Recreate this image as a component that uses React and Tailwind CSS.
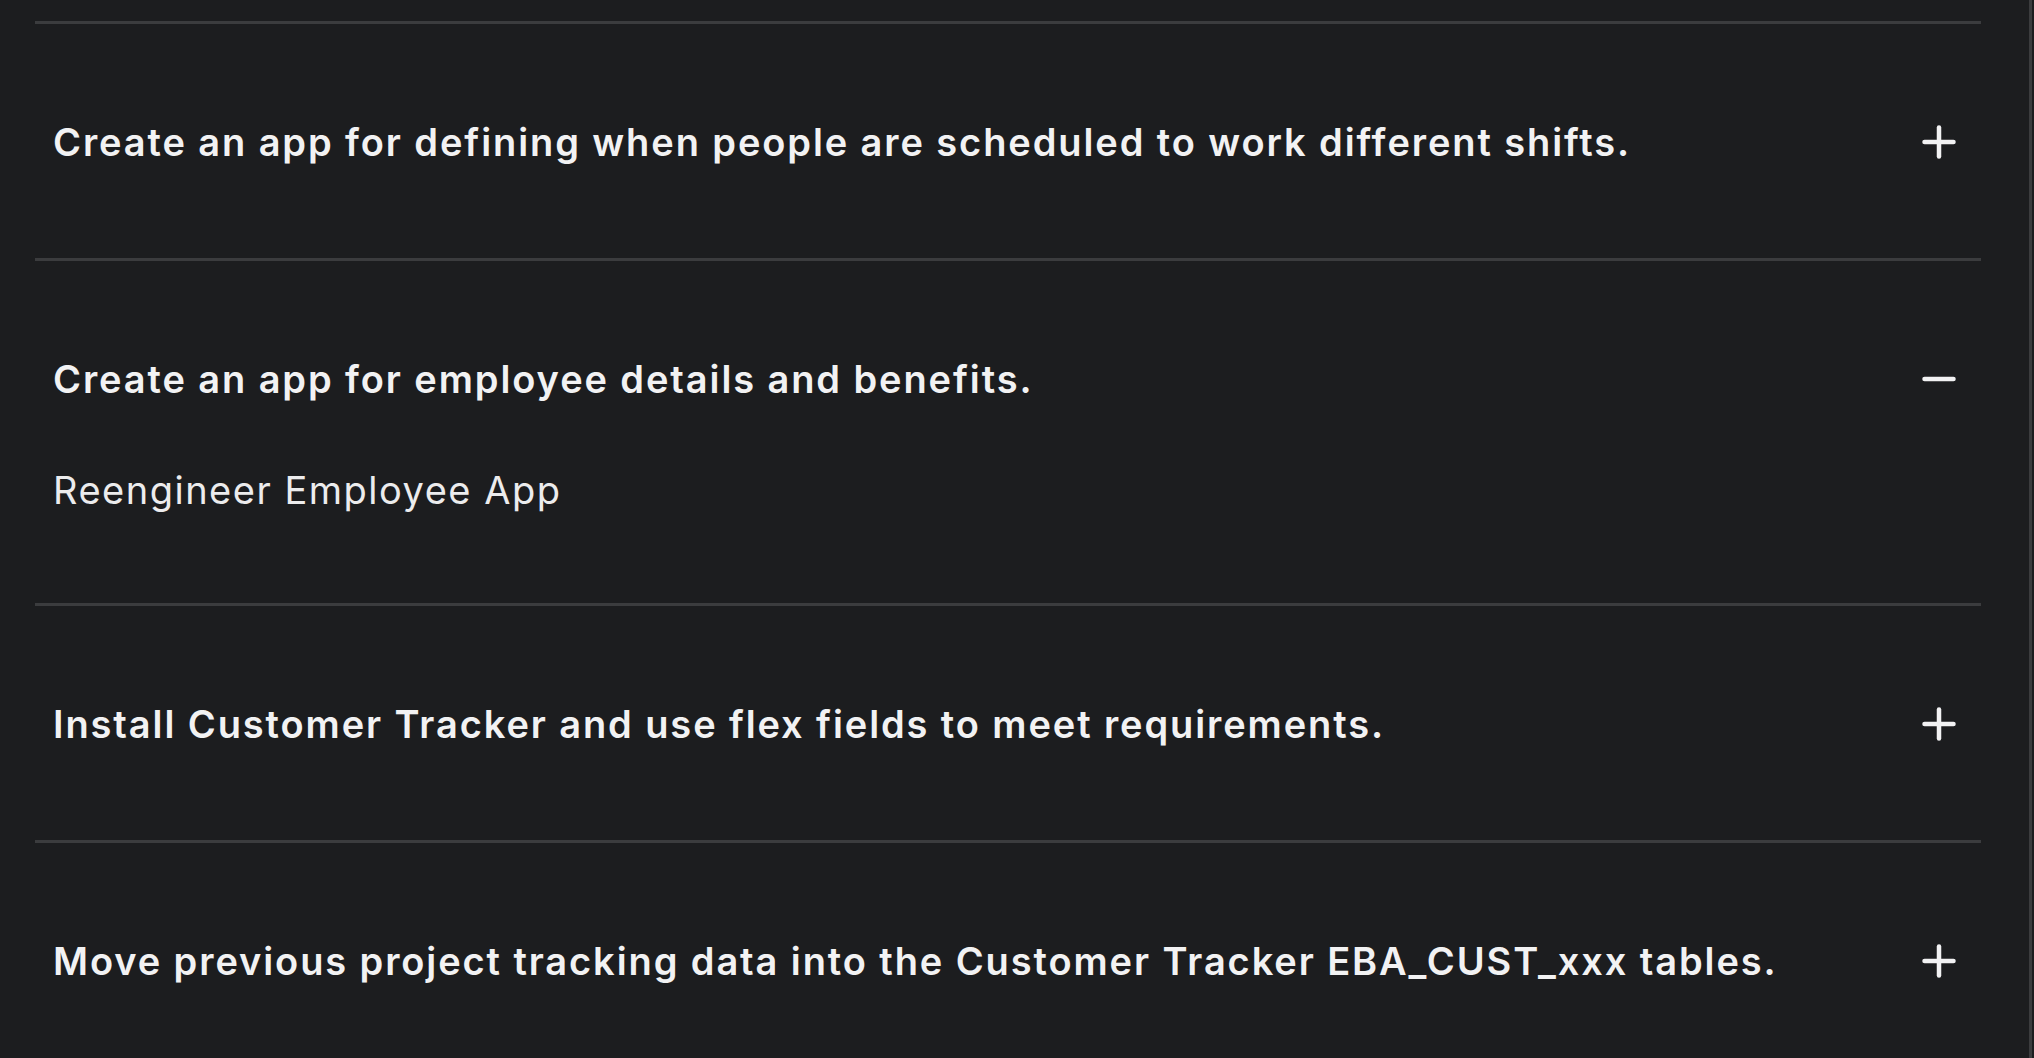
import React, { useState } from 'react';

const items = [
    { q: 'Create an app for defining when people are scheduled to work different shifts.', a: 'Reengineer Shift Scheduler App' },
    { q: 'Create an app for employee details and benefits.', a: 'Reengineer Employee App' },
    { q: 'Install Customer Tracker and use flex fields to meet requirements.', a: 'Customer Tracker' },
    { q: 'Move previous project tracking data into the Customer Tracker EBA_CUST_xxx tables.', a: 'Data Migration' },
];

const Toggle = ({ open }) => (
    <svg width="34" height="34" viewBox="0 0 34 34" fill="none" stroke="currentColor" strokeWidth="4.5" strokeLinecap="round">
        <path d="M2.5 17h29" />
        {!open && <path d="M17 2.5v29" />}
    </svg>
);

export default function App() {
    const [openIdx, setOpenIdx] = useState(1);

    return (
        <div className="flex h-screen w-full overflow-hidden bg-[#1c1d1f]" style={{ fontFamily: 'Inter, "Noto Sans", sans-serif' }}>
            <div className="flex-1 min-w-0 pl-[35px] pr-[48px] pt-[21px]">
                {items.map((it, i) => {
                    const open = openIdx === i;
                    return (
                        <div key={i} className="border-t-[3px] border-[#3b3c3e] pl-[18px] pr-[25px] pt-[90px] pb-[88px]">
                            <button
                                onClick={() => setOpenIdx(open ? -1 : i)}
                                className="w-full flex items-center justify-between h-[56px] text-left text-[#f2f2f3]"
                            >
                                <span className="text-[38px] font-semibold leading-[56px] tracking-[1.9px]">{it.q}</span>
                                <Toggle open={open} />
                            </button>
                            {open && (
                                <div className="mt-[58px] text-[38px] leading-[50px] text-[#ececed] tracking-[1.5px]">{it.a}</div>
                            )}
                        </div>
                    );
                })}
            </div>
            <div className="w-[3px] bg-[#3b3c3e]" />
            <div className="w-[2px]" />
        </div>
    );
}
